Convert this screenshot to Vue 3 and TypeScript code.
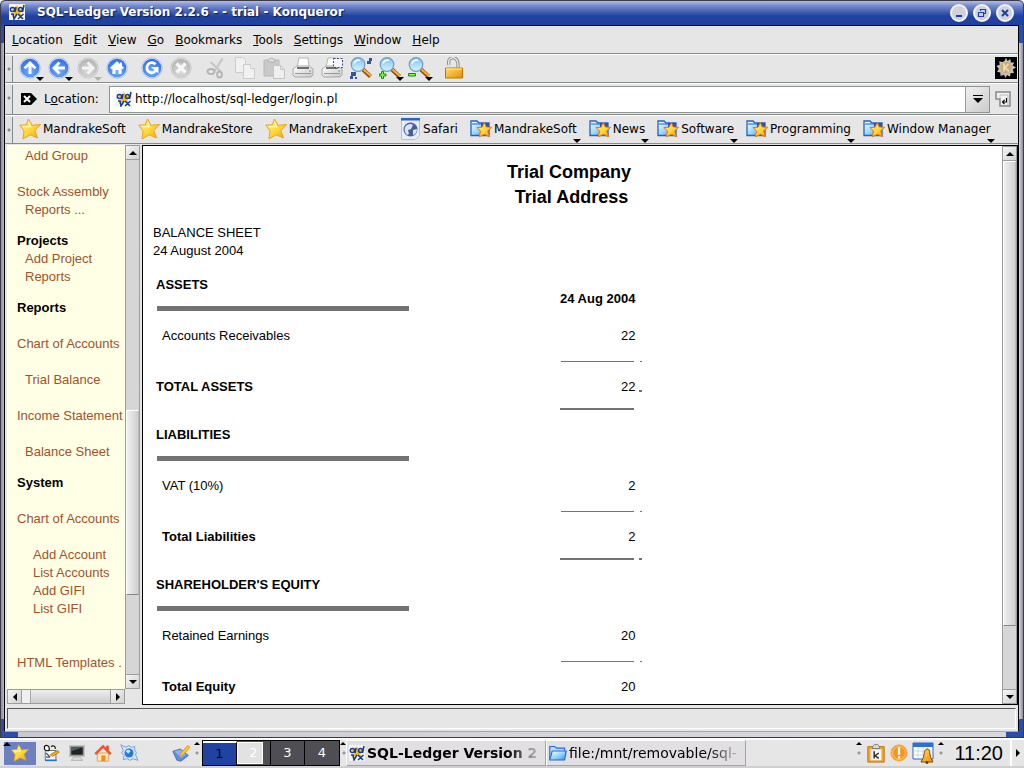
<script setup lang="ts">
import { ref } from 'vue'

interface MenuEntry { key: number; text: string }
interface Tool { icon: string; label: string; arrow?: boolean; faded?: boolean }
interface Bookmark { icon: string; text: string; menu?: boolean }
interface NavEntry { text: string; level: number; space?: string; heading?: boolean }
interface Section { title: string; item: string; total: string; amount: string; mark: string; strong: boolean; date?: string }

const address = ref('http://localhost/sql-ledger/login.pl')
const desktop = ref(1)

const menus: MenuEntry[] = ['Location', 'Edit', 'View', 'Go', 'Bookmarks', 'Tools', 'Settings', 'Window', 'Help']
  .map((text, key) => ({ key, text }))

const toolGroups: Tool[][] = [
  [
    { icon: 'up', label: 'Up', arrow: true },
    { icon: 'back', label: 'Back', arrow: true },
    { icon: 'forward', label: 'Forward', arrow: true, faded: true },
    { icon: 'home', label: 'Home' },
  ],
  [
    { icon: 'reload', label: 'Reload' },
    { icon: 'stop', label: 'Stop' },
  ],
  [
    { icon: 'cut', label: 'Cut' },
    { icon: 'copy', label: 'Copy' },
    { icon: 'paste', label: 'Paste' },
    { icon: 'print', label: 'Print' },
    { icon: 'printframe', label: 'Print Frame' },
    { icon: 'find', label: 'Find' },
    { icon: 'zoomin', label: 'Increase Font Sizes', arrow: true },
    { icon: 'zoomout', label: 'Decrease Font Sizes', arrow: true },
  ],
  [{ icon: 'lock', label: 'Security' }],
]

const bookmarks: Bookmark[] = [
  { icon: 'star', text: 'MandrakeSoft' },
  { icon: 'star', text: 'MandrakeStore' },
  { icon: 'star', text: 'MandrakeExpert' },
  { icon: 'globe', text: 'Safari' },
  { icon: 'starfolder', text: 'MandrakeSoft', menu: true },
  { icon: 'starfolder', text: 'News', menu: true },
  { icon: 'starfolder', text: 'Software', menu: true },
  { icon: 'starfolder', text: 'Programming', menu: true },
  { icon: 'starfolder', text: 'Window Manager', menu: true },
]

const nav: NavEntry[] = [
  { text: 'Add Group', level: 1 },
  { text: 'Stock Assembly', level: 0, space: 'line' },
  { text: 'Reports ...', level: 1 },
  { text: 'Projects', level: 0, space: 'group', heading: true },
  { text: 'Add Project', level: 1 },
  { text: 'Reports', level: 1 },
  { text: 'Reports', level: 0, space: 'group', heading: true },
  { text: 'Chart of Accounts', level: 0, space: 'line' },
  { text: 'Trial Balance', level: 1, space: 'line' },
  { text: 'Income Statement', level: 0, space: 'line' },
  { text: 'Balance Sheet', level: 1, space: 'line' },
  { text: 'System', level: 0, space: 'group', heading: true },
  { text: 'Chart of Accounts', level: 0, space: 'line' },
  { text: 'Add Account', level: 2, space: 'line' },
  { text: 'List Accounts', level: 2 },
  { text: 'Add GIFI', level: 2 },
  { text: 'List GIFI', level: 2 },
  { text: 'HTML Templates .', level: 0, space: 'wide' },
]

const sections: Section[] = [
  { title: 'ASSETS', item: 'Accounts Receivables', total: 'TOTAL ASSETS', amount: '22', mark: 'total', strong: true, date: '24 Aug 2004' },
  { title: 'LIABILITIES', item: 'VAT (10%)', total: 'Total Liabilities', amount: '2', mark: 'end', strong: false },
  { title: "SHAREHOLDER'S EQUITY", item: 'Retained Earnings', total: 'Total Equity', amount: '20', mark: 'end', strong: false },
]

const launchers: Tool[] = [
  { icon: 'pim', label: 'Organizer' },
  { icon: 'monitor', label: 'Terminal' },
  { icon: 'house', label: 'Home folder' },
  { icon: 'gearglobe', label: 'Web browser' },
]
</script>

<template>
  <svg class="defs" width="0" height="0" aria-hidden="true">
    <defs>
      <radialGradient id="gBlue" cx="50%" cy="70%" r="70%">
        <stop offset="0" stop-color="#6fb0ff" /><stop offset="1" stop-color="#2f6ce4" />
      </radialGradient>
      <radialGradient id="gGray" cx="50%" cy="70%" r="70%">
        <stop offset="0" stop-color="#dcdcdc" /><stop offset="1" stop-color="#b2b2b2" />
      </radialGradient>
      <linearGradient id="gStar" x1="0" y1="0" x2="1" y2="1">
        <stop offset="0.1" stop-color="#fff27a" /><stop offset="0.55" stop-color="#ffd633" /><stop offset="1" stop-color="#f59a00" />
      </linearGradient>
      <linearGradient id="gGold" x1="0" y1="0" x2="1" y2="1">
        <stop offset="0" stop-color="#ffe066" /><stop offset="1" stop-color="#f08a00" />
      </linearGradient>
      <linearGradient id="gFolder" x1="0" y1="0" x2="1" y2="1">
        <stop offset="0" stop-color="#ffffff" /><stop offset="0.5" stop-color="#9ed8fa" /><stop offset="1" stop-color="#3f8bea" />
      </linearGradient>
      <linearGradient id="gLens" x1="0" y1="0" x2="0" y2="1">
        <stop offset="0" stop-color="#7fc0ee" /><stop offset="1" stop-color="#d8f6ff" />
      </linearGradient>
      <linearGradient id="gPaper" x1="0" y1="0" x2="1" y2="1">
        <stop offset="0" stop-color="#ffffff" /><stop offset="1" stop-color="#c8c8c8" />
      </linearGradient>
    </defs>
    <symbol id="ball" viewBox="0 0 22 22">
      <circle cx="11" cy="11" r="10.2" fill="#eef2fa" stroke="#9db4e0" stroke-width="0.8" />
      <circle cx="11" cy="11" r="9.300" fill="url(#gBlue)" />
    </symbol>
    <symbol id="grayball" viewBox="0 0 22 22">
      <circle cx="11" cy="11" r="10.2" fill="#efefef" stroke="#bcbcbc" stroke-width="0.8" />
      <circle cx="11" cy="11" r="9.300" fill="url(#gGray)" />
    </symbol>
    <symbol id="up" viewBox="0 0 22 22">
      <use href="#ball" /><path d="M11 4 4.500 10.400 6.500 12.300l3-2.700V17h3V9.600l3 2.700 2-1.900z" fill="#fff" />
    </symbol>
    <symbol id="back" viewBox="0 0 22 22">
      <use href="#ball" /><path d="M4 11l6.500-6.500L12.400 6.500 9.600 9.500H17v3H9.600l2.800 3-1.900 2z" fill="#fff" />
    </symbol>
    <symbol id="forward" viewBox="0 0 22 22">
      <use href="#grayball" /><path d="M18 11l-6.500-6.500L9.600 6.500l2.800 3H5v3h7.400l-2.800 3 1.900 2z" fill="#f4f4f4" />
    </symbol>
    <symbol id="home" viewBox="0 0 22 22">
      <use href="#ball" /><path d="M11 4.200 4 10.800l1.400 1.500 1-.8V17h3.100v-4h3v4h3.100v-5.500l1 .8 1.400-1.500-2-1.900V5.500h-2v1.500z" fill="#fff" />
    </symbol>
    <symbol id="reload" viewBox="0 0 22 22">
      <use href="#ball" />
      <path d="M14.500 7.300A5 5 0 1 0 15.500 12.500" fill="none" stroke="#fff" stroke-width="2.800" /><path d="M17.500 10v6.500L10 10z" fill="#fff" />
    </symbol>
    <symbol id="stop" viewBox="0 0 22 22">
      <use href="#grayball" /><path d="M6.500 6.500l9 9M15.500 6.500l-9 9" stroke="#f8f8f8" stroke-width="3.200" />
    </symbol>
    <symbol id="cut" viewBox="0 0 22 22">
      <path d="M17.500 1.500 9.500 14M5.500 5l10 9" stroke="#c6c6c6" stroke-width="2.200" />
      <g fill="none" stroke="#b4b4b4" stroke-width="1.800"><ellipse cx="6" cy="14.500" rx="3.500" ry="2.500" /><ellipse cx="14.500" cy="17.500" rx="2.400" ry="3" /></g>
    </symbol>
    <symbol id="copy" viewBox="0 0 22 22">
      <g fill="#f1f1f1" stroke="#cccccc"><path d="M1.500.5h7l3 3v12h-10z" /><path d="M9.500 7.500h7l4 4v10h-11z" /><path d="M16.500 7.500v4h4" /></g>
    </symbol>
    <symbol id="paste" viewBox="0 0 22 22">
      <path d="M1 3h15v16H1z" fill="#c9c9c9" stroke="#b8b8b8" /><path d="M5 5c0-5 7-5 7 0z" fill="#ddd" stroke="#b0b0b0" />
      <path d="M10.500 8.500h7l4 4v9h-11z" fill="#efefef" stroke="#c4c4c4" /><path d="M17.500 8.500v4h4" fill="none" stroke="#c4c4c4" />
    </symbol>
    <symbol id="print" viewBox="0 0 22 22">
      <path d="M5 11 7 1h9l1 10z" fill="#fff" stroke="#b8b8b8" /><path d="M1 12l4-3h12l4 3v6l-2 2H3l-2-2z" fill="url(#gPaper)" stroke="#a8a8a8" />
      <path d="M5 11h12" stroke="#444" stroke-width="1.500" /><path d="M3 16.500h16" stroke="#999" /><circle cx="18" cy="14" r=".8" fill="#4a8" />
    </symbol>
    <symbol id="printframe" viewBox="0 0 22 22">
      <use href="#print" /><path d="M12.500 1.500h9v9h-9z" fill="#f5f5ff" stroke="#36437a" stroke-dasharray="2 1.500" />
    </symbol>
    <symbol id="lens" viewBox="0 0 22 22">
      <path d="M13 12.500 20.500 19.500" stroke="#8a4a00" stroke-width="4.200" /><path d="M13.500 12.500 21 19" stroke="#f7ae45" stroke-width="2.300" />
      <circle cx="8" cy="7.500" r="6.800" fill="url(#gLens)" stroke="#6c9fc8" stroke-width="1.200" /><path d="M4 6.500c1-3 4-4 6-3" fill="none" stroke="#fff" stroke-width="1.500" />
    </symbol>
    <symbol id="find" viewBox="0 0 22 22">
      <use href="#lens" /><path d="M17 4h2V1h3v3h-1v3h-4zM1 15h5v4H3v3H0v-3h1zM5 20h2v2H5z" fill="#35569a" />
    </symbol>
    <symbol id="zoomin" viewBox="0 0 22 22">
      <use href="#lens" /><path d="M2.500 14.500h2v2.500H7v2H4.500v2.500h-2V19H0v-2h2.500z" fill="#7aff3c" stroke="#188a18" />
    </symbol>
    <symbol id="zoomout" viewBox="0 0 22 22">
      <use href="#lens" /><path d="M.5 16.500h7v2.500h-7z" fill="#7aff3c" stroke="#188a18" />
    </symbol>
    <symbol id="lock" viewBox="0 0 22 22">
      <path d="M6 8C4 1 10-1 13.500 2.500c2 2 1.500 5 1.500 8" fill="none" stroke="#8c8c8c" stroke-width="3.200" /><path d="M6 8C4 1 10-1 13.500 2.500c2 2 1.500 5 1.500 8" fill="none" stroke="#eee" stroke-width="1.300" />
      <path d="M2.500 11h17v10h-17z" fill="url(#gGold)" stroke="#b87800" /><path d="M3 12h16" stroke="#fff0a0" />
    </symbol>
    <symbol id="gear" viewBox="0 0 22 22">
      <path d="M0 0h22v22H0z" fill="#000" />
      <path d="M9.500 4 11 .8 12.500 4l3-2 .3 3.400 3.500.2-1.700 3L21 10.500l-3.200 2 1.200 3.500-3.500.2-.5 3.500-3-1.800L10.500 21 9 17.700l-3.500 1.300L5.300 15.500 2 14.800l2-3L1.300 9l3.400-1.200L4.200 4.200l3.300.8z" fill="#c4c1bc" />
      <circle cx="11" cy="10.500" r="5.800" fill="#d2ab6c" /><path d="M9 6.500v8M13.500 7l-3.500 3.500 4 4" fill="none" stroke="#e9dcc4" stroke-width="1.700" />
    </symbol>
    <symbol id="star" viewBox="0 0 22 22">
      <path d="M9.500 1l3.500 6.300 8.500-.8-5.600 6L18.500 20l-7.300-3.200L4 21l1-8L.8 7.200l6.400-.4z" fill="url(#gStar)" stroke="#eda02a" />
      <path d="M9.500 4l2 4.800-7.500-.3" fill="none" stroke="#fff9c0" stroke-width="1.200" />
    </symbol>
    <symbol id="folder" viewBox="0 0 22 22">
      <path d="M1 19V3h6l2 2h10v3" fill="#b9dcf8" stroke="#2368d8" stroke-width="1.400" /><path d="M1 19.500 4 8.500h17l-2 11z" fill="url(#gFolder)" stroke="#2368d8" stroke-width="1.400" />
    </symbol>
    <symbol id="starfolder" viewBox="0 0 22 22">
      <path d="M1 17.500V3h6l2 2h10v12.500z" fill="url(#gFolder)" stroke="#2063c4" stroke-width="1.300" /><path d="M2 6h16" stroke="#2f7be0" stroke-width="1.200" /><path d="M11 5h8v4h-8z" fill="#2455b4" />
      <path d="M14.300 4.500l2 4.500 5.200.2-3.700 3.800 1.700 5.700-5-2.300-5.200 2.300 1.200-5.500L7 9.500l5-.3z" fill="url(#gStar)" stroke="#ee6a1a" />
    </symbol>
    <symbol id="globe" viewBox="0 0 22 22">
      <path d="M2.500.5h18v17l-4 4h-14z" fill="#e9edf6" stroke="#b7c1d6" /><path d="M2 0h19v2.500H2z" fill="#2a62c4" />
      <circle cx="11.500" cy="11.500" r="7" fill="#44619f" /><path d="M6 9c2-3 6-4 8-2l-2 4-3 1 1 4-2 1c-2-2-3-5-2-8zM14 12l4-1c0 3-2 6-4 6z" fill="#dbe4f4" />
    </symbol>
    <symbol id="advx" viewBox="0 0 16 16">
      <path d="M0 0h16v16H0z" fill="#f4f5f2" />
      <path d="M8 1l2 4 5-1-4 4 2 5-5-3-5 3 2-5-3-4 4 1z" fill="#f4b81c" />
      <g fill="none" stroke="#163a8c" stroke-width="1.500"><ellipse cx="3.500" cy="5.500" rx="2.200" ry="2" /><path d="M7 3 6 8M15 1l-1.500 7M2 10h2l1 5 3-5M9 10l5 5M14.500 10 9 15" /><ellipse cx="11.500" cy="5.500" rx="2" ry="2" /></g>
    </symbol>
    <symbol id="clear" viewBox="0 0 16 14">
      <path d="M0 1h10l6 6-6 6H0z" fill="#000" /><path d="M3 4l6 6M9 4l-6 6" stroke="#fff" stroke-width="2" />
    </symbol>
    <symbol id="go" viewBox="0 0 18 18">
      <path d="M1 2h14v14H5V9H1z" fill="#f2f2f2" stroke="#888" stroke-width="1.500" /><path d="M5 9V5h8v10" fill="none" stroke="#bbb" /><path d="M11.500 8v4h-4M9.500 10l-2 2 2 2" fill="none" stroke="#111" stroke-width="1.200" />
    </symbol>
    <symbol id="pim" viewBox="0 0 22 22">
      <path d="M4 8h13v12H4z" fill="#f7f7f7" stroke="#555" /><path d="M3 3c3-3 6 0 6 3s-5 3-6 0zM11 3c3-2 6 0 5 3" fill="#fff" stroke="#111" stroke-width="1.500" />
      <path d="M5 11l5 5M5 16h5" stroke="#357" stroke-width="1.500" /><path d="M10 13l9-5 2 2-8 5z" fill="#ffb414" stroke="#a66a00" /><path d="M4 20h14" stroke="#27b" stroke-width="2" />
    </symbol>
    <symbol id="monitor" viewBox="0 0 22 22">
      <path d="M2 2h18v13H2z" fill="#888" stroke="#c4c4c4" stroke-width="1.500" /><path d="M4 4h14v9H4z" fill="#1d2428" /><path d="M4 4h14L4 9z" fill="#53605f" /><path d="M7 16h8l3 4H4z" fill="#ddd" stroke="#aaa" />
    </symbol>
    <symbol id="house" viewBox="0 0 22 22">
      <path d="M4 11h14v10H4z" fill="#ffe7b0" stroke="#d79a4c" /><path d="M15 2h3v6h-3z" fill="#e8401e" /><path d="M1.500 12.500 11 3l9.500 9.500" fill="none" stroke="#ea5230" stroke-width="3" /><path d="M9 14h5v7H9z" fill="#f28a22" />
    </symbol>
    <symbol id="gearglobe" viewBox="0 0 22 22">
      <path d="M1 1l6 3 4-2 3 2 4-1v5l2 2-1 3 3 7-6-2-4 2-3-2-5 1 1-5-3-3 2-3z" fill="#d8e8fa" stroke="#6d8fc4" />
      <circle cx="11" cy="11" r="5.500" fill="#2279e0" /><path d="M7 9c2-3 5-2 6 0l-3 3z" fill="#b8ecff" />
    </symbol>
    <symbol id="pen" viewBox="0 0 22 22">
      <path d="M1 9l9-3 10 8-9 7-5-1z" fill="#5f8be0" stroke="#4668b4" /><path d="M3 9l7-2 7 6-6 4z" fill="#8fb2f4" /><path d="M10 12l9-10 3 2-9 10-4 1z" fill="#ffc532" stroke="#d98a00" />
    </symbol>
    <symbol id="klipper" viewBox="0 0 22 22">
      <path d="M2 4h18v17H2z" fill="#f3a62b" stroke="#b86e00" /><path d="M5 7h12v12H5z" fill="#f4f6fa" /><path d="M7 6c0-6 8-6 8 0z" fill="#d6dce2" stroke="#777" />
      <path d="M9 9v8M14 11l-4 3 4 3" fill="none" stroke="#333" stroke-width="1.700" />
    </symbol>
    <symbol id="alert" viewBox="0 0 22 22">
      <circle cx="11" cy="11" r="9" fill="#f79420" stroke="#ffb050" /><circle cx="11" cy="11" r="7" fill="none" stroke="#ffd29a" /><path d="M9.800 5h2.500v8H9.800zM9.800 14.500h2.500V17H9.800z" fill="#fff" />
    </symbol>
    <symbol id="calendar" viewBox="0 0 22 22">
      <path d="M1 1h20v16H1z" fill="#fff" stroke="#2466c8" /><path d="M1 1h20v4H1z" fill="#2b70d8" /><path d="M1 9h20M1 13h20M6 5v12M11 5v12M16 5v12" stroke="#b8c8dc" stroke-width=".7" />
      <path d="M10 18c3-3 1-10 5-11s2 8 5 11l1 2H9z" fill="url(#gGold)" stroke="#8c4600" /><circle cx="15" cy="20.500" r="1.400" fill="#613000" />
    </symbol>
    <symbol id="tri-up" viewBox="0 0 8 4"><path d="M0 4l4-4 4 4z" /></symbol>
    <symbol id="tri-down" viewBox="0 0 8 4"><path d="M0 0h8L4 4z" /></symbol>
    <symbol id="tri-left" viewBox="0 0 4 8"><path d="M4 0v8L0 4z" /></symbol>
    <symbol id="tri-right" viewBox="0 0 4 8"><path d="M0 0v8l4-4z" /></symbol>
  </svg>

  <div class="screen">
    <div class="window">
      <header class="titlebar">
        <svg class="i16"><use href="#advx" /></svg>
        <h1>SQL-Ledger Version 2.2.6 - - trial - Konqueror</h1>
        <div class="winbuttons">
          <button type="button" aria-label="Minimize"><svg viewBox="0 0 12 12"><path d="M3 9h6" stroke="#1e41a0" stroke-width="2" /></svg></button>
          <button type="button" aria-label="Restore"><svg viewBox="0 0 12 12"><path d="M4.500 4V2.500h5v4H8M2.500 5.500h5v4h-5z" fill="none" stroke="#1e41a0" stroke-width="1.200" /></svg></button>
          <button type="button" aria-label="Close"><svg viewBox="0 0 12 12"><path d="M3 3l6 6M9 3l-6 6" stroke="#1e41a0" stroke-width="2" /></svg></button>
        </div>
      </header>

      <div class="inner">
        <nav class="menubar" aria-label="Menu">
          <button v-for="m in menus" :key="m.key" type="button"><u>{{ m.text[0] }}</u>{{ m.text.slice(1) }}</button>
        </nav>

        <div class="bar tools" role="toolbar" aria-label="Main toolbar">
          <span class="grip"></span>
          <div v-for="(group, g) in toolGroups" :key="g" class="group">
            <button v-for="t in group" :key="t.icon" type="button" class="tool" :aria-label="t.label">
              <svg class="i22"><use :href="'#' + t.icon" /></svg>
              <svg v-if="t.arrow" class="drop" :class="{ faded: t.faded }"><use href="#tri-down" /></svg>
            </button>
          </div>
          <svg class="i22 throbber"><use href="#gear" /></svg>
        </div>

        <form class="bar location" @submit.prevent>
          <span class="grip"></span>
          <button type="button" class="plain" aria-label="Clear location"><svg class="clear"><use href="#clear" /></svg></button>
          <label for="address">L<u>o</u>cation:</label>
          <div class="combo">
            <svg class="i16"><use href="#advx" /></svg>
            <input id="address" v-model="address" type="text" spellcheck="false">
            <button type="button" aria-label="History"><svg viewBox="0 0 10 9"><path d="M0 0h10v1H0zM0 3h10L5 8z" /></svg></button>
          </div>
          <button type="submit" class="plain" aria-label="Go"><svg class="go"><use href="#go" /></svg></button>
        </form>

        <div class="bar bookmarks" role="toolbar" aria-label="Bookmarks">
          <span class="grip"></span>
          <button v-for="(b, n) in bookmarks" :key="n" type="button" class="bookmark">
            <svg class="i22"><use :href="'#' + b.icon" /></svg>
            <span>{{ b.text }}</span>
            <svg v-if="b.menu" class="drop"><use href="#tri-down" /></svg>
          </button>
        </div>

        <div class="frames">
          <aside class="side">
            <ul class="nav">
              <li v-for="(n, k) in nav" :key="k" :class="['level' + n.level, n.space]">
                <b v-if="n.heading">{{ n.text }}</b>
                <a v-else href="#">{{ n.text }}</a>
              </li>
            </ul>
            <div class="vscroll">
              <button type="button" aria-label="Scroll up"><svg class="tv"><use href="#tri-up" /></svg></button>
              <div class="track side-track"><div class="thumb"></div></div>
              <button type="button" aria-label="Scroll down"><svg class="tv"><use href="#tri-down" /></svg></button>
            </div>
            <div class="hscroll">
              <button type="button" aria-label="Scroll left"><svg class="th"><use href="#tri-left" /></svg></button>
              <div class="htrack"><div class="hthumb"></div></div>
              <button type="button" aria-label="Scroll right"><svg class="th"><use href="#tri-right" /></svg></button>
            </div>
          </aside>

          <main class="page">
            <div class="report">
              <h2>Trial Company&nbsp;<br>Trial Address</h2>
              <p>BALANCE SHEET<br>24 August 2004</p>
              <table>
                <tbody v-for="s in sections" :key="s.title">
                  <tr class="head">
                    <th scope="rowgroup">{{ s.title }}<hr></th>
                    <td class="date">{{ s.date }}</td>
                    <td class="mark"></td>
                  </tr>
                  <tr class="item">
                    <td>{{ s.item }}</td>
                    <td class="amount">{{ s.amount }}</td>
                    <td></td>
                  </tr>
                  <tr class="single">
                    <td></td>
                    <td><hr></td>
                    <td><hr></td>
                  </tr>
                  <tr class="item total">
                    <th scope="row" :class="{ outer: s.strong }">{{ s.total }}</th>
                    <td class="amount">{{ s.amount }}</td>
                    <td><hr v-if="s.mark === 'total'"></td>
                  </tr>
                  <tr class="double">
                    <td></td>
                    <td><hr></td>
                    <td><hr v-if="s.mark === 'end'"></td>
                  </tr>
                </tbody>
              </table>
            </div>
            <div class="vscroll">
              <button type="button" aria-label="Scroll up"><svg class="tv"><use href="#tri-up" /></svg></button>
              <div class="track page-track"><div class="thumb"></div></div>
              <button type="button" aria-label="Scroll down"><svg class="tv"><use href="#tri-down" /></svg></button>
            </div>
          </main>
        </div>

        <div class="status"></div>
      </div>
    </div>

    <footer class="panel">
      <button type="button" class="start" aria-label="Start"><svg class="start-arrow"><use href="#tri-up" /></svg><svg class="i18"><use href="#star" /></svg></button>
      <div class="launchers">
        <button v-for="l in launchers" :key="l.icon" type="button" class="plain" :aria-label="l.label"><svg class="i18"><use :href="'#' + l.icon" /></svg></button>
      </div>
      <button type="button" class="plain pen" aria-label="Notes"><svg class="i18"><use href="#pen" /></svg></button>
      <span class="handle"><svg><use href="#tri-up" /></svg></span>
      <div class="pager">
        <button v-for="d in 4" :key="d" type="button" :class="{ current: d === desktop }" @click="desktop = d"><span v-if="d === 2" class="mini"></span><span>{{ d }}</span></button>
      </div>
      <span class="handle"><svg><use href="#tri-up" /></svg></span>
      <div class="tasks">
        <button type="button" class="active"><svg class="i16"><use href="#advx" /></svg><span>SQL-Ledger Version 2</span></button>
        <button type="button"><svg class="i18"><use href="#folder" /></svg><span>file:/mnt/removable/sql-</span></button>
      </div>
      <div class="tray">
        <span class="handle"><svg><use href="#tri-up" /></svg></span>
        <svg class="i20"><use href="#klipper" /></svg>
        <svg class="i20"><use href="#alert" /></svg>
        <svg class="i22"><use href="#calendar" /></svg>
        <span class="handle"><svg><use href="#tri-up" /></svg></span>
        <time>11:20</time>
        <button type="button" class="hide" aria-label="Hide panel"><svg class="th"><use href="#tri-right" /></svg></button>
      </div>
    </footer>
  </div>
</template>

<style>
html, body { margin: 0; overflow: hidden; background: #fff; }
</style>

<style scoped>
* { box-sizing: border-box; }
.defs { position: absolute; }
svg { display: block; flex: none; }
button { margin: 0; padding: 0; border: 0; background: none; font: inherit; color: inherit; }
.i16 { width: 16px; height: 16px; }
.i18 { width: 18px; height: 18px; }
.i20 { width: 20px; height: 20px; }
.i22 { width: 22px; height: 22px; }
.plain { display: flex; align-items: center; justify-content: center; }

.screen { display: flex; flex-direction: column; height: 100vh; font: 12px/18px "DejaVu Sans", sans-serif; color: #000; }
.window { position: relative; flex: 1; min-height: 0; display: flex; flex-direction: column; padding: 0 5px 5px; border: 1px solid #3c3a46; border-width: 0 1px 1px; background: linear-gradient(90deg, #8d8b9c, #c9c7d2 4px, #d6d4da 50%, #d8d6de calc(100% - 4px), #8d8b9c); border-radius: 5px 5px 0 0; }
.window::before, .window::after { content: ""; position: absolute; bottom: 0; width: 17px; height: 18px; background: #2c4da6; }
.window::before { left: 0; }
.window::after { right: 0; }

.titlebar { position: relative; display: flex; align-items: center; height: 25px; margin: 0 -5px; padding: 0 9px 0 8px; border-top: 1px solid #3c3a46; border-radius: 5px 5px 0 0; background: linear-gradient(#b3bce6, #7388cc 5px, #4a66b4 10px, #2042a0 15px, #1f419f); color: #fff; }
.titlebar::before, .titlebar::after { content: ""; position: absolute; top: 24px; width: 4px; height: 18px; background: #2c4da6; }
.titlebar::before { left: 0; }
.titlebar::after { right: 0; }
.titlebar .i16 { margin-bottom: 2px; }
h1 { flex: 1; margin: 0 0 2px 12px; font-size: 12px; font-weight: bold; text-shadow: 1px 1px 1px #0a1a4a; }
.winbuttons { display: flex; gap: 5px; }
.winbuttons button { display: flex; align-items: center; justify-content: center; width: 18px; height: 18px; border: 2px solid #f2f2f2; border-radius: 50%; background: #cfd2dc; }
.winbuttons svg { width: 12px; height: 12px; }

.inner { position: relative; z-index: 1; flex: 1; min-height: 0; display: flex; flex-direction: column; margin: 0 -1px 0 -2px; border: 1px solid #000; border-bottom-color: #a8a6b0; background: #e6e6e6; }
.menubar { display: flex; align-items: center; gap: 11px; height: 27px; padding-left: 7px; }
.bar { display: flex; align-items: center; border-top: 1px solid #858b88; box-shadow: inset 0 1px #fff; }
.grip { align-self: stretch; width: 8px; margin-top: 2px; flex: none; border-right: 1px solid #858b88; background: radial-gradient(circle at 4px 13px, #888 1px, transparent 2px) #e2e2e2; }
.tools { height: 29px; padding-right: 1px; }
.group { display: flex; margin-right: 6px; }
.grip + .group { margin-left: 2px; }
.tool { position: relative; width: 29px; height: 26px; display: flex; align-items: center; justify-content: center; }
.drop { position: absolute; right: 0; bottom: 0; width: 8px; height: 4px; }
.drop.faded { fill: #a9b8a9; }
.throbber { margin-left: auto; }
.location { height: 32px; }
.location .plain { width: 28px; }
.clear { width: 16px; height: 14px; margin-left: 3px; }
.location label { width: 65px; margin-left: 3px; }
.combo { flex: 1; display: flex; align-items: center; height: 27px; border: 1px solid #8f9391; background: #fff; padding-left: 6px; margin-top: 1px; }
.combo input { flex: 1; min-width: 0; border: 0; outline: 0; padding: 0 0 0 3px; font: inherit; background: none; }
.combo button { width: 24px; align-self: stretch; border-left: 1px solid #9c9c9c; background: linear-gradient(135deg, #eee, #ccc); display: flex; align-items: center; justify-content: center; }
.combo svg:not(.i16) { width: 10px; height: 9px; }
.go { width: 18px; height: 18px; }
.bookmarks { height: 29px; padding-left: 0; gap: 12px; }
.bookmarks .grip { margin-right: -6px; }
.bookmark { position: relative; display: flex; align-items: center; gap: 2px; height: 24px; white-space: nowrap; }
.bookmark .drop { right: -4px; bottom: -2px; }

.frames { flex: 1; min-height: 0; display: flex; gap: 2px; border-top: 1px solid #858b88; padding: 1px 0 0 2px; }
.side { flex: none; width: 133px; display: grid; grid-template: minmax(0, 1fr) 15px / minmax(0, 1fr) 15px; margin-bottom: 1px; }
.nav { margin: 0; padding: 2px 0 0 10px; list-style: none; background: #ffffe5; overflow: hidden; white-space: nowrap; font: 13px/18px "Liberation Sans", Arial, sans-serif; }
.nav a { color: #a0522d; text-decoration: none; }
.level1 { padding-left: 8px; }
.level2 { padding-left: 16px; }
.line { margin-top: 18px; }
.nav .group { display: block; margin: 13px 0 0; }
.wide { margin-top: 36px; }
.vscroll { display: flex; flex-direction: column; min-height: 0; border-left: 1px solid #9c9c9c; border-right: 1px solid #9c9c9c; background: #d6d6d6; }
.vscroll button { height: 15px; flex: none; display: flex; align-items: center; justify-content: center; border: 1px solid #9c9c9c; border-width: 1px 0; background: linear-gradient(135deg, #f6f6f6, #d0d0d0); }
.track { flex: 1; display: flex; flex-direction: column; min-height: 0; }
.thumb { border: 1px solid #fff; border-right-color: #bbb; border-bottom-color: #888; background: linear-gradient(90deg, #f0f0f0, #cfcfcf); }
.side-track .thumb { margin-top: auto; margin-bottom: 79px; height: 36%; }
.page-track .thumb { height: 88%; }
.tv { width: 8px; height: 4px; }
.th { width: 4px; height: 8px; }
.hscroll { display: flex; border: 1px solid #9c9c9c; background: #dcdcdc; }
.hscroll button { width: 14px; display: flex; align-items: center; justify-content: center; background: linear-gradient(135deg, #f6f6f6, #d0d0d0); border-right: 1px solid #9c9c9c; }
.hscroll button:last-child { border-right: 0; border-left: 1px solid #9c9c9c; }
.htrack { flex: 1; display: flex; background: linear-gradient(#eee, #ccc); }
.hthumb { width: 9px; border-right: 1px solid #aaa; background: #f0f0f0; }

.page { flex: 1; min-width: 0; display: flex; border: 1px solid #000; background: #fff; font: 13px/18px "Liberation Sans", Arial, sans-serif; }
.page .vscroll { flex: none; width: 15px; }
.report { flex: 1; min-width: 0; overflow: hidden; padding: 14px 2px 0 0; }
h2 { margin: 0; text-align: center; font-size: 18px; line-height: 25px; }
p { margin: 14px 0 0 10px; }
table { margin: 15px 0 0 13px; border-collapse: collapse; }
th, td { padding: 0; text-align: left; vertical-align: middle; }
th, .date { font-weight: bold; }
hr { margin: 0; border: 0; background: #737373; }
.head th { width: 404px; height: 46px; padding-top: 1px; vertical-align: top; }
.head hr { width: 252px; height: 5px; margin: 12px 0 0 1px; }
.date { width: 75px; padding-top: 2px; text-align: right; white-space: nowrap; }
.mark { width: 8px; }
.item td, .item th { height: 30px; }
.item > :first-child { padding-left: 6px; }
.item > .outer { padding-left: 0; }
.item .amount { text-align: right; }
.single td { height: 21px; }
.single hr { height: 1px; margin-right: 1px; margin-left: 1px; }
.double td { height: 23px; padding-bottom: 10px; }
.double hr { height: 2px; margin-right: 1px; }
td:last-child hr { width: 3px; margin-left: 4px; margin-right: 0; }
.single td:last-child hr { width: 2px; margin-left: 5px; }
.total td:last-child hr { height: 2px; margin-top: 8px; }

.status { height: 21px; margin: 3px 2px 2px; border: 1px solid #fff; border-top-color: #555; border-left-color: #555; }

.panel { display: flex; align-items: center; height: 30px; padding: 0 0 0 4px; background: #e6e6e6; border-top: 2px solid #fff; border-bottom: 2px solid #d0d0d0; }
.start { position: relative; width: 32px; height: 23px; display: flex; align-items: center; justify-content: center; background: #6a80c0; }
.start-arrow { position: absolute; left: -1px; top: 0; width: 8px; height: 4px; }
.launchers { display: flex; gap: 8px; margin-left: 6px; }
.pen { margin-left: 34px; }
.handle { align-self: stretch; width: 8px; display: flex; justify-content: center; padding-top: 2px; background: radial-gradient(circle at 4px 13px, #999 1px, transparent 2px); }
.handle svg { width: 6px; height: 3px; }
.pen + .handle { margin-left: 3px; margin-right: 1px; }
.pager { display: flex; border: 1px solid #000; font-size: 13px; }
.pager button { position: relative; width: 34px; height: 24px; background: #4f4e54; color: #fff; border-right: 1px solid #000; }
.pager button:last-child { border-right: 0; }
.pager .current { background: #2042a0; color: #000; border-top: 2px solid #fff; }
.mini { position: absolute; left: 0; top: 1px; width: 26px; height: 22px; border: 1px solid #fff; background: #e2e2e2; }
.mini + span { position: relative; }
.pager + .handle { width: 6px; }
.tasks { display: flex; }
.tasks button { width: 200px; height: 26px; display: flex; align-items: center; gap: 2px; padding: 0 2px; border: 1px solid #a5a3a6; border-color: #fff #a5a3a6 #a5a3a6 #fff; background: #e2dfe3; font-size: 14px; white-space: nowrap; }
.tasks span { flex: 1; min-width: 0; text-align: left; mask-image: linear-gradient(90deg, #000 80%, transparent); }
.tasks .active { font-weight: bold; }
.tray { display: flex; align-items: center; align-self: stretch; gap: 3px; margin-left: auto; }
time { margin: 0 4px 0 6px; font: 20px/24px "Liberation Sans", Arial, sans-serif; }
.hide { align-self: stretch; width: 14px; display: flex; align-items: center; justify-content: center; border-left: 2px solid #fff; }
</style>
